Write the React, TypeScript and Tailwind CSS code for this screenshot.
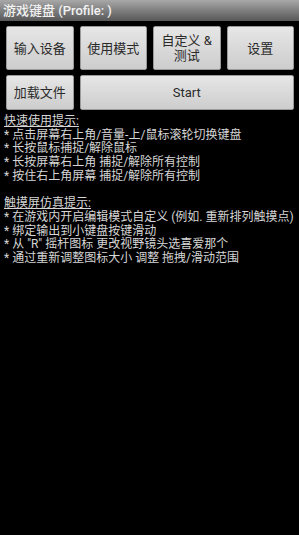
const FONT = '"Roboto", "Noto Sans CJK SC", sans-serif';

const quickTips = [
  '点击屏幕右上角/音量-上/鼠标滚轮切换键盘',
  '长按鼠标捕捉/解除鼠标',
  '长按屏幕右上角 捕捉/解除所有控制',
  '按住右上角屏幕 捕捉/解除所有控制',
];

const touchTips = [
  '在游戏内开启编辑模式自定义 (例如. 重新排列触摸点)',
  '绑定输出到小键盘按键滑动',
  '从 "R" 摇杆图标 更改视野镜头选喜爱那个',
  '通过重新调整图标大小 调整 拖拽/滑动范围',
];

function KeyButton({ children, className = '' }: { children: React.ReactNode; className?: string }) {
  return (
    <button
      className={`flex items-center justify-center rounded-[2px] border border-[#9a9a9a] bg-gradient-to-b from-[#e6e6e6] to-[#cdcdcd] text-[13px] leading-[15px] text-[#2a2a2a] ${className}`}
    >
      {children}
    </button>
  );
}

export default function App() {
  return (
    <div className="min-h-[535px] w-full bg-black" style={{ fontFamily: FONT }}>
      <div className="flex h-[21px] items-center bg-gradient-to-b from-[#a8a8a8] to-[#585858] px-[3px]">
        <span className="text-[13px] font-medium text-[#f2f2f2]">游戏键盘 (Profile: )</span>
      </div>

      <div className="grid grid-cols-4 gap-x-[6px] pl-[6px] pr-[5px] pt-[5px]">
        <KeyButton className="h-[44px]">输入设备</KeyButton>
        <KeyButton className="h-[44px]">使用模式</KeyButton>
        <KeyButton className="h-[44px] flex-col">
          <span>自定义 &amp;</span>
          <span>测试</span>
        </KeyButton>
        <KeyButton className="h-[44px]">设置</KeyButton>
      </div>
      <div className="grid grid-cols-4 gap-x-[6px] pl-[6px] pr-[5px] pt-[5px]">
        <KeyButton className="h-[35px]">加载文件</KeyButton>
        <KeyButton className="col-span-3 h-[35px]">Start</KeyButton>
      </div>

      <div className="mt-[5px] px-[4px] text-[12px] leading-[13.7px] text-[#d6d6d6]">
        <div className="underline">快速使用提示:</div>
        {quickTips.map((t) => (
          <div key={t}>* {t}</div>
        ))}
        <div className="h-[13.7px]" />
        <div className="underline">触摸屏仿真提示:</div>
        {touchTips.map((t) => (
          <div key={t}>* {t}</div>
        ))}
      </div>
    </div>
  );
}
